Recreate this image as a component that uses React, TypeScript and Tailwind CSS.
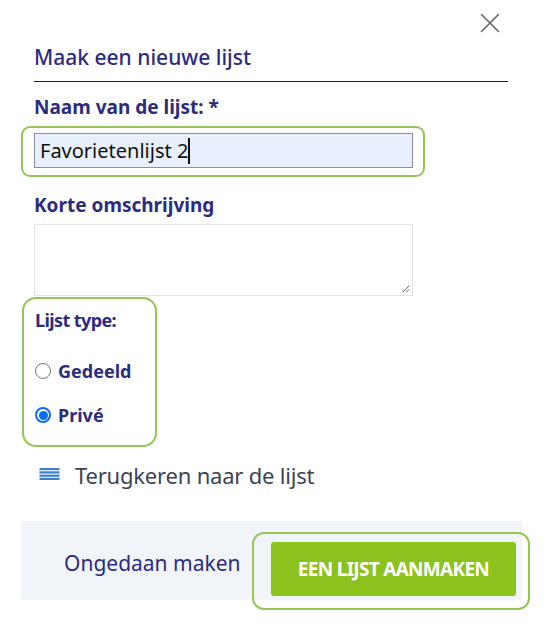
export default function App() {
  const navy = "text-[#2c2c7c]";
  return (
    <div
      className="relative w-[544px] h-[636px] bg-white overflow-hidden"
      style={{ fontFamily: '"Noto Sans", "Open Sans", sans-serif' }}
    >
      {/* close */}
      <div className="flex justify-end pt-[13px] pr-[44px]">
        <button className="w-[20px] h-[20px] text-[#5f6670]">
          <svg viewBox="0 0 20 20" className="w-[20px] h-[20px]" fill="none" stroke="currentColor" strokeWidth="1.6" strokeLinecap="round">
            <path d="M1.5 1.5 L18.5 18.5 M18.5 1.5 L1.5 18.5" />
          </svg>
        </button>
      </div>

      <div className="pl-[34px] pr-[36px]">
        <h2 className={`mt-[10px] text-[21px] leading-[28px] ${navy} font-medium border-b border-[#222] pb-[10px]`}>
          Maak een nieuwe lijst
        </h2>

        <label className={`block mt-[12px] text-[19px] leading-[26px] font-bold ${navy}`}>
          Naam van de lijst: *
        </label>
        <div className="relative mt-[13px] w-[379px]">
          <span className="absolute -left-[13px] -right-[12px] -top-[7px] -bottom-[9px] rounded-[9px] border-2 border-[#93c654]" />
          <div className="relative h-[35px] bg-[#e8f0fe] border border-[#8a8f96] flex items-center pl-[5px]">
            <span className="text-[20px] text-[#111] leading-none">Favorietenlijst 2</span>
            <span className="w-[1.5px] h-[26px] bg-[#111]" />
          </div>
        </div>

        <label className={`block mt-[24px] text-[19px] leading-[26px] font-bold ${navy}`}>
          Korte omschrijving
        </label>
        <div className="relative mt-[6px] w-[379px] h-[72px] border border-[#e2e2e2]">
          <svg viewBox="0 0 10 10" className="absolute right-[2px] bottom-[2px] w-[9px] h-[9px]" stroke="#555" strokeWidth="1.1">
            <path d="M9 2 L2 9 M9 6 L6 9" />
          </svg>
        </div>
      </div>

      {/* lijst type */}
      <div className="ml-[22px] mt-[1px] w-[135px] h-[150px] rounded-[14px] border-2 border-[#93c654] pl-[11px] pt-[9px]">
        <div className={`text-[18px] leading-[24px] font-bold ${navy} tracking-[-0.6px]`}>Lijst type:</div>
        <label className="flex items-center gap-[7px] mt-[27px] h-[24px]">
          <span className="w-[16px] h-[16px] rounded-full border border-[#767676] bg-white" />
          <span className={`text-[18px] font-bold ${navy}`}>Gedeeld</span>
        </label>
        <label className="flex items-center gap-[7px] mt-[20px] h-[24px]">
          <span className="w-[16px] h-[16px] rounded-full border-2 border-[#0a6cf5] bg-white flex items-center justify-center">
            <span className="w-[9px] h-[9px] rounded-full bg-[#0a6cf5]" />
          </span>
          <span className={`text-[18px] font-bold ${navy}`}>Privé</span>
        </label>
      </div>

      {/* terug */}
      <div className="flex items-center gap-[15px] ml-[39px] mt-[14px] h-[28px]">
        <svg viewBox="0 0 20 12" className="w-[21px] h-[12px] -mt-[2px]" fill="#3f7fcb">
          <rect x="0" y="0" width="20" height="2.2" />
          <rect x="0" y="3.3" width="20" height="2.2" />
          <rect x="0" y="6.6" width="20" height="2.2" />
          <rect x="0" y="9.8" width="20" height="2.2" />
        </svg>
        <span className="text-[22px] text-[#3b4452] tracking-[-0.2px]">Terugkeren naar de lijst</span>
      </div>

      {/* footer */}
      <div className="ml-[21px] mt-[32px] w-[501px] h-[79px] bg-[#f1f4f9] flex items-center">
        <button className={`ml-[43px] mt-[6px] text-[21px] ${navy} font-normal`}>Ongedaan maken</button>
        <div className="relative ml-auto mr-[6px] mt-[17px]">
          <span className="absolute -left-[19px] -right-[14px] -top-[10px] -bottom-[14px] rounded-[12px] border-2 border-[#93c654]" />
          <button className="relative w-[245px] h-[54px] rounded-[3px] bg-[#8cc21e] text-white text-[19px] font-bold tracking-[-0.7px] uppercase">
            Een lijst aanmaken
          </button>
        </div>
      </div>
    </div>
  );
}
